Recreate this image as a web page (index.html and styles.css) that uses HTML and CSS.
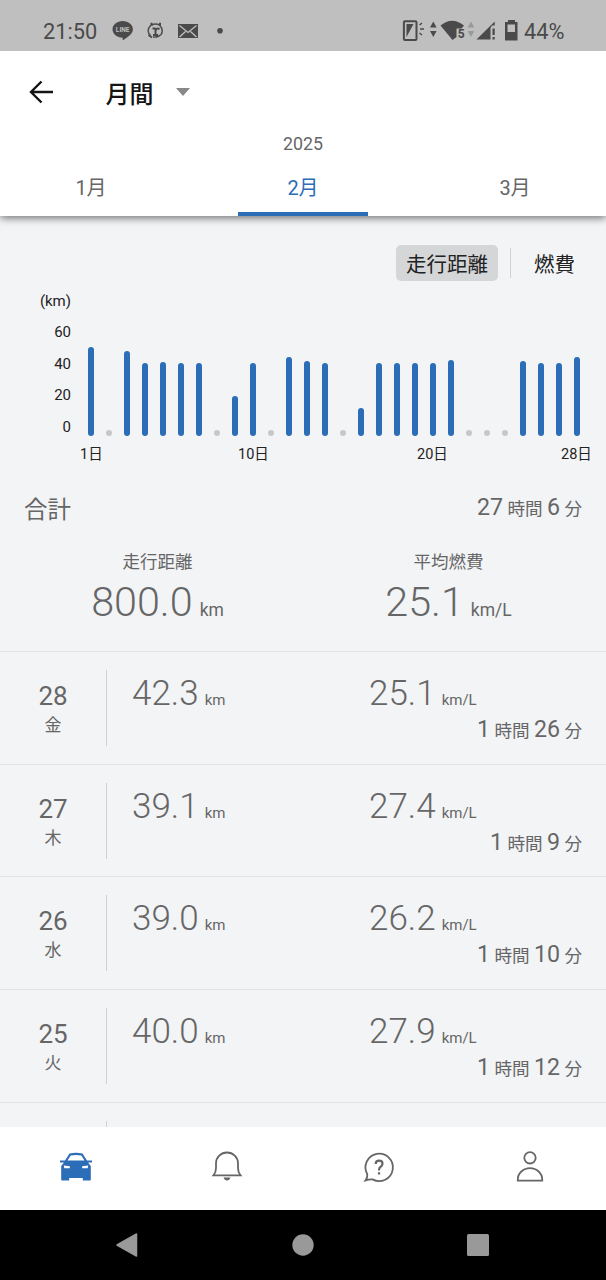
FILE: index.html
```html
<!DOCTYPE html>
<html lang="ja">
<head>
    <meta charset="UTF-8">
    <meta name="viewport" content="width=device-width, initial-scale=1.0">
    <title>月間</title>
    <link rel="stylesheet" href="styles.css">
</head>
<body>
    <div class="status-bar">
        <span class="clock">21:50</span>
        <svg class="status-left" width="120" height="24" viewBox="110 20 120 24">
            <path d="M122.700 21c5.700 0 10.200 3.700 10.200 8.300 0 4-3.700 7-9.500 10.600-.9.500-.8-.3-.7-2.200-5.700 0-10.200-3.800-10.200-8.400s4.500-8.300 10.200-8.300z" fill="#4a4a4a"/>
            <text class="line-text" x="122.700" y="31.500" text-anchor="middle">LINE</text>
            <g fill="none" stroke="#4a4a4a" stroke-width="1.400">
                <path d="M151.500 25q4-2 8 0M151 25c-4 4-3.500 8-.5 10.500M159.500 25c4 4 3.500 9-.5 11q-3 1.500-6 1"/>
                <path d="M151.500 22.700v3M160 22.700v3M148.500 35l3.500 2.500" stroke-width="2"/>
                <path d="M155.500 28v7M153 35h5M152.500 28.500h3M155.500 30.500q1-3 4-1.500" stroke-width="2"/>
            </g>
            <path d="M178 24h20v14h-20z" fill="#4a4a4a"/>
            <path d="M179.500 25.500l8.500 7 8.500-7M179.500 37l6-5.500M196.500 37l-6-5.500" fill="none" stroke="#bfbfbf" stroke-width="1.300"/>
            <circle cx="220" cy="30.700" r="2.800" fill="#4a4a4a"/>
        </svg>
        <svg class="status-right" width="122" height="24" viewBox="400 20 122 24">
            <rect x="403.900" y="21.200" width="12.600" height="18.800" rx="1" fill="none" stroke="#4a4a4a" stroke-width="2"/>
            <path d="M406.500 24h7l-7 13z" fill="#4a4a4a"/>
            <path d="M419.500 25l2.500-2M420 29h4M419.500 33l2.500 2" stroke="#4a4a4a" stroke-width="1.500"/>
            <path d="M433.300 21.500l3.300 6h-6.600zM433.300 37l3.300-6h-6.600z" fill="#4a4a4a"/>
            <path d="M440.500 25.500q11.500-9.500 23.500 0l-2.500 3h-5v8.500l-4 3z" fill="#4a4a4a"/>
            <text class="wifi-text" x="457.800" y="38">5</text>
            <path d="M471 21.500l3.300 6h-6.600zM471 37l3.300-6h-6.600z" fill="#999"/>
            <path d="M494.700 21.500v4h-2.700l-1.500 2.500v11.500h-14z" fill="#4a4a4a"/>
            <path d="M493.600 28.500v6.500M493.600 37v2.500" stroke="#4a4a4a" stroke-width="2.200"/>
            <path d="M508 20h7v2h2.500v18.500h-12.500v-18.500h3zM507.500 24.500v7.500h7.500v-7.500z" fill="#4a4a4a" fill-rule="evenodd"/>
        </svg>
        <span class="battery">44%</span>
    </div>

    <div class="header">
        <div class="title-bar">
            <svg width="24" height="24" viewBox="0 0 24 24">
                <path d="M12.500 1.500L2 12 12.500 22.500M2 12H24" fill="none" stroke="#151515" stroke-width="2.400"/>
            </svg>
            <div class="title">月間</div>
            <div class="caret"></div>
        </div>
        <div class="year">2025</div>
        <div class="tabs">
            <div class="tab">1月</div>
            <div class="tab active"><span>2月</span></div>
            <div class="tab">3月</div>
        </div>
    </div>

    <div class="content">
        <div class="switch">
            <div class="switch-item selected">走行距離</div>
            <div class="switch-line"></div>
            <div class="switch-item">燃費</div>
        </div>

        <div class="chart">
            <div class="y-axis">
                <div>(km)</div>
                <div>60</div>
                <div>40</div>
                <div>20</div>
                <div>0</div>
            </div>
            <div class="plot">
                <div class="bars">
                    <div class="bar" style="height: 89px"></div>
                    <div class="dot"></div>
                    <div class="bar" style="height: 85px"></div>
                    <div class="bar" style="height: 73px"></div>
                    <div class="bar" style="height: 74px"></div>
                    <div class="bar" style="height: 73px"></div>
                    <div class="bar" style="height: 73px"></div>
                    <div class="dot"></div>
                    <div class="bar" style="height: 40px"></div>
                    <div class="bar" style="height: 73px"></div>
                    <div class="dot"></div>
                    <div class="bar" style="height: 79px"></div>
                    <div class="bar" style="height: 75px"></div>
                    <div class="bar" style="height: 73px"></div>
                    <div class="dot"></div>
                    <div class="bar" style="height: 28px"></div>
                    <div class="bar" style="height: 73px"></div>
                    <div class="bar" style="height: 73px"></div>
                    <div class="bar" style="height: 73px"></div>
                    <div class="bar" style="height: 73px"></div>
                    <div class="bar" style="height: 76px"></div>
                    <div class="dot"></div>
                    <div class="dot"></div>
                    <div class="dot"></div>
                    <div class="bar" style="height: 75px"></div>
                    <div class="bar" style="height: 73px"></div>
                    <div class="bar" style="height: 73px"></div>
                    <div class="bar" style="height: 79px"></div>
                </div>
                <div class="x-axis">
                    <div class="day-1">1日</div>
                    <div class="day-10">10日</div>
                    <div class="day-20">20日</div>
                    <div class="day-28">28日</div>
                </div>
            </div>
        </div>

        <!-- 合計 -->
        <div class="total">
            <div class="total-head">
                <div class="total-title">合計</div>
                <div class="time"><b>27</b> 時間 <b>6</b> 分</div>
            </div>
            <div class="total-values">
                <div class="total-item">
                    <div class="total-label">走行距離</div>
                    <div class="total-value">800.0<small>km</small></div>
                </div>
                <div class="total-item">
                    <div class="total-label">平均燃費</div>
                    <div class="total-value">25.1<small>km/L</small></div>
                </div>
            </div>
        </div>

        <!-- 日別 -->
        <div class="row">
            <div class="date">
                <div class="day">28</div>
                <div class="weekday">金</div>
            </div>
            <div class="detail">
                <div class="values">
                    <div class="value">42.3<small>km</small></div>
                    <div class="value">25.1<small>km/L</small></div>
                </div>
                <div class="time"><b>1</b> 時間 <b>26</b> 分</div>
            </div>
        </div>
        <div class="row">
            <div class="date">
                <div class="day">27</div>
                <div class="weekday">木</div>
            </div>
            <div class="detail">
                <div class="values">
                    <div class="value">39.1<small>km</small></div>
                    <div class="value">27.4<small>km/L</small></div>
                </div>
                <div class="time"><b>1</b> 時間 <b>9</b> 分</div>
            </div>
        </div>
        <div class="row">
            <div class="date">
                <div class="day">26</div>
                <div class="weekday">水</div>
            </div>
            <div class="detail">
                <div class="values">
                    <div class="value">39.0<small>km</small></div>
                    <div class="value">26.2<small>km/L</small></div>
                </div>
                <div class="time"><b>1</b> 時間 <b>10</b> 分</div>
            </div>
        </div>
        <div class="row">
            <div class="date">
                <div class="day">25</div>
                <div class="weekday">火</div>
            </div>
            <div class="detail">
                <div class="values">
                    <div class="value">40.0<small>km</small></div>
                    <div class="value">27.9<small>km/L</small></div>
                </div>
                <div class="time"><b>1</b> 時間 <b>12</b> 分</div>
            </div>
        </div>
        <div class="row">
            <div class="date"></div>
            <div class="detail"></div>
        </div>
    </div>

    <div class="bottom-nav">
        <div class="nav-item">
            <svg width="34" height="34" viewBox="0 0 34 34">
                <path d="M10.500 3.500Q17 2 23.500 3.500L28 10.500H33v2h-4l2.800 3.500V29.500q0 1-1 1h-7V28H10.200v2.500H3.200q-1 0-1-1V16l2.800-3.500H1v-2H6z" fill="#2c6db8"/>
                <path d="M11.700 5.500Q17 4.500 22.300 5.500L25.500 10.500H8.500zM4.800 15.500l6 .8v2h-5.500zM29.200 15.500l-6 .8v2h5.500z" fill="#fff"/>
            </svg>
        </div>
        <div class="nav-item">
            <svg width="34" height="34" viewBox="0 0 34 34">
                <path d="M3.500 25.300Q6 22.500 6 18v-4.500a11 11 0 0 1 22 0V18q0 4.500 2.500 7.300z" fill="none" stroke="#666" stroke-width="1.800"/>
                <path d="M13.500 27.500h7q-1 3-3.500 3t-3.500-3z" fill="#666"/>
            </svg>
        </div>
        <div class="nav-item">
            <svg width="34" height="34" viewBox="0 0 34 34">
                <path d="M5.300 24.200A13.700 13.700 0 1 1 10.600 29.400Q8 29 3.600 30.400Q5.700 27.500 5.300 24.200z" fill="none" stroke="#666" stroke-width="1.800"/>
                <path d="M13.700 14q0-3.300 3.400-3.300t3.400 3.100q0 1.600-1.700 2.900t-1.800 3v.8M17 22.200v2.300" fill="none" stroke="#666" stroke-width="2.200"/>
            </svg>
        </div>
        <div class="nav-item">
            <svg width="34" height="34" viewBox="0 0 34 34">
                <circle cx="17" cy="7.800" r="5.700" fill="none" stroke="#666" stroke-width="1.800"/>
                <path d="M4.800 30.600V29.500a12.200 11.300 0 0 1 24.400 0V30.600z" fill="none" stroke="#666" stroke-width="1.800"/>
            </svg>
        </div>
    </div>

    <div class="system-nav">
        <svg width="24" height="24" viewBox="0 0 24 24"><path d="M21.500 1v22L2 12z" fill="#999" stroke="#999" stroke-width="1.500" stroke-linejoin="round"/></svg>
        <svg width="24" height="24" viewBox="0 0 24 24"><circle cx="12" cy="12" r="10.700" fill="#999"/></svg>
        <svg width="24" height="24" viewBox="0 0 24 24"><rect x="1" y="1" width="22" height="22" rx="1.500" fill="#999"/></svg>
    </div>
</body>
</html>
```

FILE: styles.css
```css
* {
    margin: 0;
    padding: 0;
    box-sizing: border-box;
}

body {
    width: 606px;
    height: 1280px;
    display: flex;
    flex-direction: column;
    overflow: hidden;
    background-color: #f3f4f6;
    color: #666;
    font-family: Roboto, 'Noto Sans CJK JP', sans-serif;
}

svg {
    display: block;
}

/* status bar */
.status-bar {
    height: 51px;
    flex-shrink: 0;
    display: flex;
    align-items: center;
    position: relative;
    z-index: 1;
    padding: 11px 41px 0 43px;
    background-color: #bfbfbf;
    color: #4a4a4a;
    font-size: 21.8px;
}

.clock {
    width: 67px;
}

.status-left,
.status-right {
    margin-top: 1px;
}

.status-right {
    margin-left: auto;
}

.battery {
    width: 43px;
    padding-left: 2px;
    white-space: nowrap;
}

.line-text {
    fill: #bfbfbf;
    font-size: 6.5px;
    font-weight: 700;
}

.wifi-text {
    fill: #4a4a4a;
    font-size: 12px;
    font-weight: 700;
}

/* header */
.header {
    height: 165px;
    flex-shrink: 0;
    background-color: #fff;
    box-shadow: 0 2px 8px rgba(0, 0, 0, 0.55);
}

.title-bar {
    height: 83px;
    display: flex;
    align-items: center;
    padding: 0 0 2px 29px;
}

.title {
    margin: 2px 22px 0 52.5px;
    color: #151515;
    font-size: 24px;
    font-weight: 500;
}

.caret {
    border-left: 7px solid transparent;
    border-right: 7px solid transparent;
    border-top: 8px solid #888;
}

.year {
    height: 20px;
    line-height: 20px;
    text-align: center;
    font-size: 17.8px;
}

.tabs {
    height: 62px;
    margin: 0 -15px;
    display: flex;
    clip-path: inset(0 15px);
}

.tab {
    flex: 1;
    display: flex;
    justify-content: center;
    line-height: 68px;
    font-size: 20px;
}

.tab.active {
    color: #2c6db8;
}

.tab.active span {
    width: 130px;
    text-align: center;
    border-bottom: 4px solid #2c6db8;
}

/* chart */
.content {
    flex: 1;
    min-height: 0;
    overflow: hidden;
}

.switch {
    display: flex;
    justify-content: flex-end;
    align-items: center;
    padding: 29px 31px 0 0;
    color: #222;
    font-size: 20.5px;
    line-height: 35px;
}

.switch-item {
    height: 36px;
    padding-top: 3px;
}

.switch-item.selected {
    padding: 3px 10px 0;
    border-radius: 5px;
    background-color: #d5d6d8;
}

.switch-line {
    width: 1px;
    height: 30px;
    margin: 0 23px 0 12px;
    background-color: #d0d1d3;
}

.chart {
    height: 192px;
    display: flex;
    color: #222;
    font-size: 15px;
}

.y-axis {
    width: 71px;
    padding-top: 5px;
    text-align: right;
    line-height: 31.4px;
}

.plot {
    margin-left: 17.4px;
}

.bars {
    width: 491.6px;
    height: 155px;
    display: flex;
    justify-content: space-between;
    align-items: flex-end;
}

.bar {
    width: 6px;
    border-radius: 3px;
    background-color: #2c6db8;
}

.dot {
    width: 6px;
    height: 6px;
    border-radius: 50%;
    background-color: #c6c7c9;
}

.x-axis {
    display: flex;
    padding-top: 9px;
    line-height: 20px;
    font-size: 14.5px;
    text-align: center;
    white-space: nowrap;
}

.x-axis div {
    width: 40px;
}

.day-1 {
    margin-left: -17px;
}

.day-10 {
    margin-left: 122px;
}

.day-20 {
    margin-left: 139px;
}

.day-28 {
    margin-left: 104px;
}

/* total */
.total {
    height: 178px;
    padding-top: 19px;
}

.total-head {
    height: 32px;
    display: flex;
    justify-content: space-between;
    padding: 0 24px 0 24px;
    line-height: 30px;
}

.total-title {
    padding-top: 3px;
    font-size: 23.5px;
}

.time {
    font-size: 17.6px;
    text-align: right;
    white-space: nowrap;
}

.time b {
    font-size: 23.2px;
    font-weight: 400;
}

.total-values {
    display: flex;
    padding: 26px 12px 0;
    text-align: center;
}

.total-item {
    flex: 1;
}

.total-label {
    font-size: 17.5px;
    line-height: 25px;
}

.total-value {
    font-size: 41.3px;
    font-weight: 300;
    line-height: 54px;
}

.total-value small {
    margin-left: 7px;
    font-size: 17.5px;
    font-weight: 400;
}

/* daily rows */
.row {
    height: 112.7px;
    display: flex;
    padding-top: 18px;
    border-top: 1px solid #e0e1e3;
}

.date {
    width: 107px;
    height: 76px;
    flex-shrink: 0;
    padding-top: 11px;
    border-right: 1px solid #d0d1d3;
    text-align: center;
}

.day {
    font-size: 26px;
    line-height: 30px;
}

.weekday {
    font-size: 17px;
    line-height: 28px;
}

.detail {
    flex: 1;
    min-width: 0;
    padding: 4px 24px 0 25px;
}

.values {
    height: 40px;
    display: flex;
    line-height: 40px;
}

.value {
    width: 237px;
    flex-shrink: 0;
    font-size: 35px;
    font-weight: 300;
    white-space: nowrap;
}

.value small {
    margin-left: 6px;
    font-size: 15px;
    font-weight: 400;
}

.detail .time {
    line-height: 30px;
}

/* bottom navigation */
.bottom-nav {
    height: 83px;
    flex-shrink: 0;
    display: flex;
    align-items: center;
    padding-bottom: 3px;
    background-color: #fff;
}

.nav-item {
    flex: 1;
    display: flex;
    justify-content: center;
}

.system-nav {
    height: 70px;
    flex-shrink: 0;
    display: flex;
    align-items: center;
    justify-content: space-between;
    padding: 0 116px 0 115px;
    background-color: #000;
}
```
